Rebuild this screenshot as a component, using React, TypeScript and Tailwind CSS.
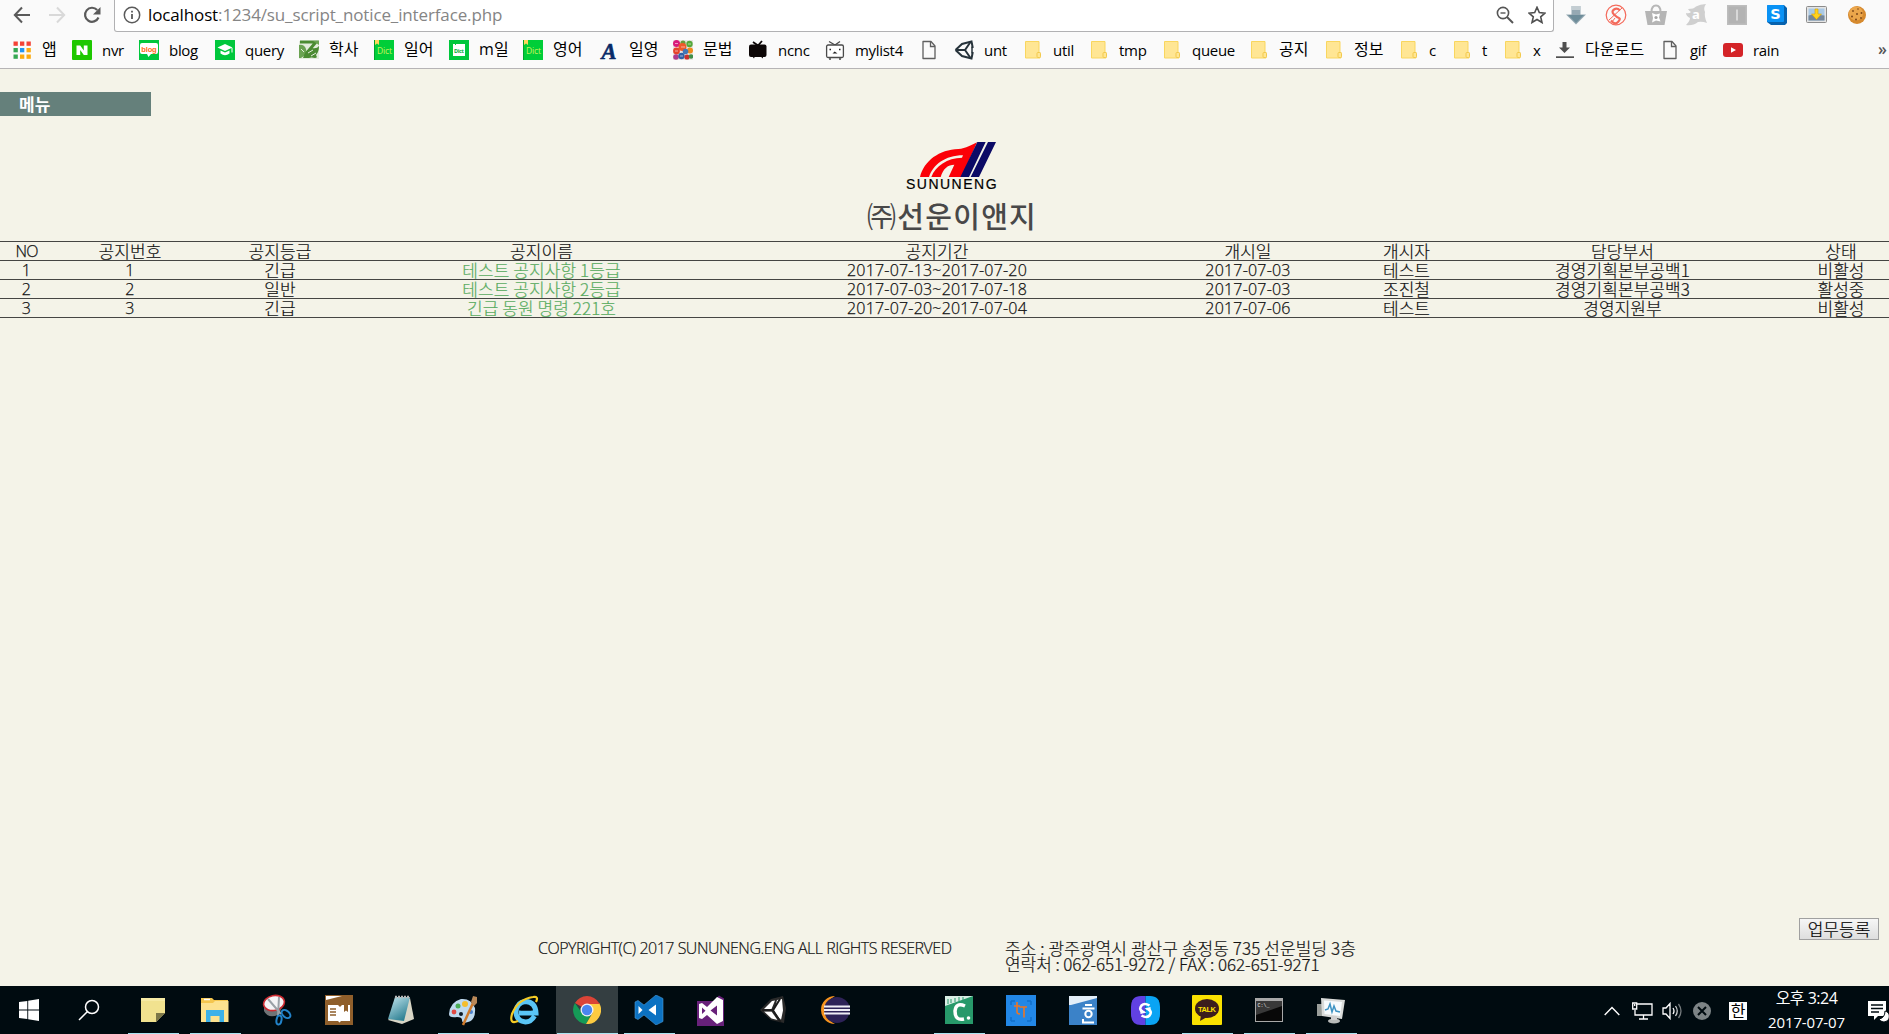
import React from "react";
import type { ReactNode } from "react";

const latin = "font-['Open_Sans','Noto_Sans_CJK_KR',sans-serif]";
const korean = "font-['Noto_Sans_CJK_KR',sans-serif]";

/* ---------- toolbar and bookmark icons ---------- */

const Folder = () => (
  <svg width="20" height="20" viewBox="0 0 20 20">
    <path d="M2.500 1.500H16v11h1v5.500H2.500z" fill="#ffe694" stroke="#f9d65f" />
    <rect x="14" y="12.500" width="3.500" height="5" rx="1" fill="#ffe694" stroke="#f2c94c" />
  </svg>
);

const Page = () => (
  <svg width="20" height="20" viewBox="0 0 20 20" fill="none" stroke="#5f5f5f" strokeWidth="1.300">
    <path d="M4 1.500h8l4 4.500v12.500H4z" strokeLinejoin="round" />
    <path d="M11.500 1.500v5H16" />
  </svg>
);

const Apps = () => {
  const colors = ["#f44336", "#f44336", "#f44336", "#34a853", "#2196f3", "#fbab10", "#34a853", "#fbab10", "#fbab10"];
  return (
    <svg width="20" height="20" viewBox="0 0 20 20">
      {colors.map((c, i) => (
        <rect key={i} x={1.5 + (i % 3) * 6.5} y={1.5 + Math.floor(i / 3) * 6.5} width="4.300" height="4.300" fill={c} />
      ))}
    </svg>
  );
};

const Naver = () => (
  <svg width="20" height="20" viewBox="0 0 20 20">
    <rect width="20" height="20" rx="1" fill="#1ec800" />
    <path d="M4.500 5.500h3.700l3.600 5v-5h3.700v9.500h-3.700l-3.600-5v5H4.500z" fill="#fff" />
  </svg>
);

const Blog = () => (
  <svg width="20" height="20" viewBox="0 0 20 20">
    <rect width="20" height="20" fill="#00c73c" />
    <path d="M3 3h14q2 0 2 2v7q0 2-2 2h-5l-2.500 3-1.500-3H3q-2 0-2-2V5q0-2 2-2z" fill="#fff" />
    <text x="2.200" y="11.500" fontSize="7.500" fontWeight="700" fill="#ff6a13" fontFamily="Liberation Sans" textLength="15.500">blog</text>
  </svg>
);

const Scholar = () => (
  <svg width="20" height="20" viewBox="0 0 20 20">
    <rect width="20" height="20" fill="#00c73c" />
    <path d="M2.500 7.500L10 4l7.500 3.500L10 11z" fill="#fff" />
    <path d="M5.500 10.500l4.500 2 4.500-2v3q-4.500 3.500-9 0z" fill="#fff" />
    <path d="M17 8v4.500" stroke="#fff" />
  </svg>
);

const School = () => (
  <svg width="20" height="20" viewBox="0 0 20 20">
    <rect y="1" width="20" height="18" fill="#e3ecdc" />
    <path d="M1 2h16L6 15" fill="none" stroke="#4b8b32" strokeWidth="3" />
    <path d="M0 5q5-1 7 4t-5 9H0z" fill="#6ba352" />
    <path d="M4 18q2-8 9-10 5 1 7-2 0 6-3 9 2 3-1 3-4-1-6 0z" fill="#4b8b32" />
    <path d="M14 1h6v4z" fill="#6ba352" />
    <path d="M9 13l5-3M12 16l5-3M2 9l3 3" stroke="#e3ecdc" />
  </svg>
);

const Dict = () => (
  <svg width="20" height="20" viewBox="0 0 20 20">
    <rect width="20" height="20" fill="#00ce38" />
    <path d="M0 0h1v20H0z" fill="#00a32c" />
    <path d="M1 0h4v5L3 3.500 1 5z" fill="#ffd65c" />
    <text x="3" y="13.500" fontSize="8.500" fill="#c8f25a" fontFamily="Open Sans" textLength="15">Dict</text>
  </svg>
);

const DictMobile = () => (
  <svg width="20" height="20" viewBox="0 0 20 20">
    <rect width="20" height="20" fill="#00c73c" />
    <path d="M4 6V4h2v1h1V4h9v12H4z" fill="#fff" />
    <text x="5" y="13" fontSize="5.500" fontWeight="700" fill="#00b035" fontFamily="Open Sans" textLength="10">Dict</text>
  </svg>
);

const LetterA = () => (
  <svg width="20" height="20" viewBox="0 0 20 20">
    <text x="2.500" y="18.500" fontSize="24" fontWeight="700" fontStyle="italic" fill="#082a68" stroke="#082a68" strokeWidth=".6" fontFamily="Liberation Serif" textLength="15" lengthAdjust="spacingAndGlyphs">A</text>
  </svg>
);

const Bubbles = () => {
  const dots: [number, number, number, string][] = [
    [3.5, 3.5, 3.5, "#d81b7a"], [10, 3, 2.6, "#6a9a3a"], [16.5, 4, 3.2, "#55a83a"], [9.5, 7, 4, "#f0582a"],
    [17, 10.5, 3, "#f08a1d"], [3.5, 11, 3.4, "#e5432a"], [12.5, 11.5, 2.8, "#4277b6"], [3, 17, 2.8, "#b03a8c"],
    [8.5, 16, 3.2, "#2f62a8"], [14, 17, 2.6, "#c8302e"], [18, 16.5, 2.3, "#3f8f48"],
  ];
  return (
    <svg width="20" height="20" viewBox="0 0 20 20">
      <rect width="20" height="20" fill="#e9e6e2" />
      {dots.map(([x, y, r, c], i) => (
        <circle key={i} cx={x} cy={y} r={r} fill={c} />
      ))}
      <path d="M2 3.500h3M8 7h4M2 11h3M7 16h3M15 4h3" stroke="#fff" strokeWidth=".8" opacity=".7" />
    </svg>
  );
};

const TvBlack = () => (
  <svg width="20" height="20" viewBox="0 0 20 20">
    <path d="M5 2l5 3.500L14 1" fill="none" stroke="#0c0606" strokeWidth="1.800" />
    <rect x="1" y="4.500" width="17.500" height="12.500" rx="2" fill="#0c0606" />
    <path d="M4 16h3l-1 2.500zM12.500 16h3l-1 2.500z" fill="#0c0606" />
  </svg>
);

const TvOutline = () => (
  <svg width="20" height="20" viewBox="0 0 20 20">
    <path d="M4 1.500l6 3.500 5-3.500" fill="none" stroke="#4a4a4a" strokeWidth="1.300" />
    <rect x="1.600" y="5" width="16.800" height="12.500" rx="1.500" fill="#fff" stroke="#4a4a4a" strokeWidth="1.300" />
    <path d="M4 19h2M14 19h2" stroke="#4a4a4a" strokeWidth="1.500" />
    <path d="M7.500 13.500l2.200-2 2.800 2z" fill="#222" />
    <path d="M4.500 9.500H6M14 9.500h1.500" stroke="#222" strokeWidth="1.500" />
  </svg>
);

/* Three-way folded cube: outer outline plus the inner spokes. */
const UnityMark = () => (
  <svg width="20" height="20" viewBox="0 0 20 20" fill="none" stroke="#27333b" strokeWidth="2">
    <path d="M1.500 10L8 4l9.500-2.500 1.300 6.500M1.500 10L8 16l9.500 2.500 1.300-6.500" />
    <path d="M2 10h9l5.500-8M11 10l5.500 8" />
    <path d="M18 6.500v7" strokeWidth="1.500" />
  </svg>
);

const Download = () => (
  <svg width="20" height="20" viewBox="0 0 20 20" fill="#4f4f4f">
    <path d="M7.500 2h4v5.500H15L9.500 13 4 7.500h3.500z" />
    <path d="M1 16.300h18V18H1z" />
  </svg>
);

const Youtube = () => (
  <svg width="20" height="20" viewBox="0 0 20 20">
    <rect y="3" width="20" height="14" rx="3" fill="#d42428" />
    <path d="M8 7.200l5 2.800-5 2.800z" fill="#fff" />
  </svg>
);

type Bookmark = { label: string; width: string; icon: ReactNode; ko?: boolean };

const bookmarks: Bookmark[] = [
  { label: "앱", width: "w-[60px]", icon: <Apps />, ko: true },
  { label: "nvr", width: "w-[67px]", icon: <Naver /> },
  { label: "blog", width: "w-[76px]", icon: <Blog /> },
  { label: "query", width: "w-[84px]", icon: <Scholar /> },
  { label: "학사", width: "w-[75px]", icon: <School />, ko: true },
  { label: "일어", width: "w-[75px]", icon: <Dict />, ko: true },
  { label: "m일", width: "w-[74px]", icon: <DictMobile />, ko: true },
  { label: "영어", width: "w-[76px]", icon: <Dict />, ko: true },
  { label: "일영", width: "w-[74px]", icon: <LetterA />, ko: true },
  { label: "문법", width: "w-[75px]", icon: <Bubbles />, ko: true },
  { label: "ncnc", width: "w-[77px]", icon: <TvBlack /> },
  { label: "mylist4", width: "w-[94px]", icon: <TvOutline /> },
  { label: "", width: "w-[35px]", icon: <Page /> },
  { label: "unt", width: "w-[69px]", icon: <UnityMark /> },
  { label: "util", width: "w-[66px]", icon: <Folder /> },
  { label: "tmp", width: "w-[73px]", icon: <Folder /> },
  { label: "queue", width: "w-[87px]", icon: <Folder /> },
  { label: "공지", width: "w-[75px]", icon: <Folder />, ko: true },
  { label: "정보", width: "w-[75px]", icon: <Folder />, ko: true },
  { label: "c", width: "w-[53px]", icon: <Folder /> },
  { label: "t", width: "w-[51px]", icon: <Folder /> },
  { label: "x", width: "w-[52px]", icon: <Folder /> },
  { label: "다운로드", width: "w-[105px]", icon: <Download />, ko: true },
  { label: "gif", width: "w-[63px]", icon: <Page /> },
  { label: "rain", width: "w-[155px]", icon: <Youtube /> },
];

const extensions: ReactNode[] = [
  <svg key="dl" width="20" height="20" viewBox="0 0 20 20">
    <path d="M5.500 1h9v8.500H20L10 19.500 0 9.500h5.500z" fill="#96a9b3" />
    <path d="M6 1h8v4H6z" fill="#c3cdd2" />
    <path d="M2 10h16l-8 8z" fill="#6e8d9a" />
  </svg>,
  <svg key="s" width="22" height="22" viewBox="0 0 22 22" fill="none" stroke="#f4695a">
    <circle cx="11" cy="11" r="9.800" strokeWidth="1.200" />
    <path d="M15 6.500q-3-3-6-1t0 5 5 3.500-1 4-7-1.500" strokeWidth="2.200" />
    <path d="M4 16L17 4M7 18l3-4" strokeWidth="1" />
  </svg>,
  <svg key="bag" width="22" height="22" viewBox="0 0 22 22">
    <path d="M6.500 8q0-6.500 4.500-6.500T15.500 8" fill="none" stroke="#b7b7b7" strokeWidth="2" />
    <path d="M0 7h22l-2.500 14h-17z" fill="#b5b5b5" />
    <path d="M7 9l4 1.500 4-1-1 4 1.500 4-4.500-1-4 2 1-4.500z" fill="#fff" />
    <circle cx="11" cy="13.500" r="1.600" fill="#a5a5a5" />
  </svg>,
  <svg key="av" width="22" height="22" viewBox="0 0 22 22">
    <path d="M3 5q6 0 8-2.500Q15 0 21 0q-3 4-1 8-1 4 2 11-5-2-9-1-5 4-12 3 4-4 4-7-4-2-4-5 3 1 5-1-2-1-3-3z" fill="#cfcfcf" />
    <text x="7" y="14.500" fontSize="13" fontWeight="700" fill="#fff" fontFamily="Open Sans">a</text>
  </svg>,
  <svg key="i" width="20" height="20" viewBox="0 0 20 20">
    <rect width="20" height="20" fill="#bdbdbd" />
    <rect x="1.500" y="1.500" width="17" height="17" fill="#b3b3b3" />
    <path d="M10 4.500v11" stroke="#e5e5e5" strokeWidth="1.500" />
  </svg>,
  <svg key="sb" width="20" height="20" viewBox="0 0 20 20">
    <path d="M1 0h16l3 3v15l-2 2H4l-4-3V1z" fill="#0662ae" />
    <rect width="17" height="17" rx="1" fill="#0a92f5" />
    <text x="3.300" y="13.500" fontSize="14.500" fontWeight="700" fill="#fff" fontFamily="DejaVu Sans">S</text>
  </svg>,
  <svg key="pic" width="21" height="18" viewBox="0 0 21 18">
    <rect x=".5" y=".5" width="20" height="16" rx="1" fill="#e4e4e4" stroke="#8c8c8c" />
    <rect x="2.500" y="2.500" width="16" height="12" fill="#a9c9e6" />
    <path d="M2.500 9.500l5-1 11 1v5h-16z" fill="#76879a" />
    <path d="M9 3h3v5h3.500l-5 5.500L5.500 8H9z" fill="#ffd21e" stroke="#d8a100" strokeWidth=".6" />
  </svg>,
  <svg key="cookie" width="20" height="20" viewBox="0 0 20 20">
    <circle cx="10" cy="10" r="9" fill="#d68a2e" />
    <circle cx="9" cy="8.500" r="7" fill="#eba64b" />
    <g fill="#7d4718">
      <circle cx="6" cy="6" r=".9" /><circle cx="11" cy="4" r=".8" /><circle cx="10" cy="9" r="1" />
      <circle cx="14.500" cy="8" r="1" /><circle cx="5" cy="11.500" r="1" /><circle cx="9" cy="14.500" r="1" /><circle cx="14" cy="13" r=".9" />
    </g>
  </svg>,
];

function BrowserChrome() {
  return (
    <header className={`shrink-0 bg-[#fafafa] text-black ${latin}`}>
      <div className="flex h-8">
        <div className="flex w-[114px] items-center pb-[3px] pl-[13px]">
          <svg width="18" height="18" viewBox="0 0 18 18" fill="none" stroke="#5a5a5a" strokeWidth="2">
            <path d="M17 9H2M9 1.500L1.800 9 9 16.500" />
          </svg>
          <svg className="ml-[17px]" width="18" height="18" viewBox="0 0 18 18" fill="none" stroke="#d9d9d9" strokeWidth="2">
            <path d="M1 9h15M9 1.500L16.200 9 9 16.500" />
          </svg>
          <svg className="ml-[17px]" width="18" height="18" viewBox="0 0 18 18">
            <path d="M15.500 11.500A7 7 0 1 1 14.200 4" fill="none" stroke="#5a5a5a" strokeWidth="2.200" />
            <path d="M17.500 1v7.500H10z" fill="#5a5a5a" />
          </svg>
        </div>
        <div className="flex w-[1440px] items-center rounded-b-[3px] border border-t-0 border-[#b1b1b3] bg-white pb-px pl-[8px]">
          <svg width="18" height="18" viewBox="0 0 18 18" fill="none" stroke="#5a5a5a">
            <circle cx="9" cy="9" r="7.700" strokeWidth="1.500" />
            <path d="M9 8v5M9 4.800v1.800" strokeWidth="1.800" />
          </svg>
          <div className="ml-[7px] text-[17px] leading-6 tracking-[-0.13px] text-[#858585]">
            <span className="text-black">localhost</span>:1234/su_script_notice_interface.php
          </div>
          <svg className="ml-auto" width="18" height="18" viewBox="0 0 18 18" fill="none" stroke="#555">
            <circle cx="7" cy="7" r="5.600" strokeWidth="1.600" />
            <path d="M11 11l6 6" strokeWidth="2" />
            <path d="M4.500 7h5" strokeWidth="1.400" />
          </svg>
          <svg className="mr-[7px] ml-[14px]" width="18" height="18" viewBox="0 0 18 18" fill="none" stroke="#505050" strokeWidth="1.600">
            <path d="M9 1.300l2.300 5.300 5.700.500-4.300 3.800 1.300 5.600L9 13.500l-5 3 1.300-5.600L1 7.100l5.700-.5z" />
          </svg>
        </div>
        <div className="flex items-center pb-[3px] pl-[2px]">
          {extensions.map((icon, i) => (
            <div key={i} className="flex w-[40.15px] justify-center">{icon}</div>
          ))}
        </div>
      </div>
      <div className="flex h-[37px] items-center border-b border-[#b6b4b6] pl-[12px]">
        {bookmarks.map((b, i) => (
          <div key={i} className={`flex shrink-0 items-center gap-[10px] whitespace-nowrap ${b.width}`}>
            {b.icon}
            <span className={b.ko ? "pb-[2px] text-[16px] leading-5 tracking-[0.15px]" : "pb-px text-[15px] leading-5 tracking-[-0.3px]"}>{b.label}</span>
          </div>
        ))}
        <span className="shrink-0 pb-[3px] text-[16px] font-semibold leading-5 text-[#555]">»</span>
      </div>
    </header>
  );
}

/* ---------- page ---------- */

const columns = [
  "w-[53px]", "w-[154px]", "w-[146px]", "w-[377px]", "w-[414px]", "w-[208px]", "w-[109px]", "w-[323px]", "w-[105px] pl-[9px]",
];
const headings = ["NO", "공지번호", "공지등급", "공지이름", "공지기간", "개시일", "개시자", "담당부서", "상태"];
const notices = [
  ["1", "1", "긴급", "테스트 공지사항 1등급", "2017-07-13~2017-07-20", "2017-07-03", "테스트", "경영기획본부공백1", "비활성"],
  ["2", "2", "일반", "테스트 공지사항 2등급", "2017-07-03~2017-07-18", "2017-07-03", "조진철", "경영기획본부공백3", "활성중"],
  ["3", "3", "긴급", "긴급 동원 명령 221호", "2017-07-20~2017-07-04", "2017-07-06", "테스트", "경영지원부", "비활성"],
];

function Cell({ text, col, link }: { text: string; col: number; link?: boolean }) {
  const isNumeric = /^\d/.test(text);
  const style = isNumeric
    ? `text-[16px] font-light tracking-[0.2px] [-webkit-text-stroke:0.25px] ${latin}`
    : text === "NO"
      ? `text-[16px] font-light tracking-[-1px] [-webkit-text-stroke:0.25px] ${latin}`
      : `text-[17px] font-light tracking-[0.08px] [-webkit-text-stroke:0.2px] ${korean}`;
  return (
    <div className={`shrink-0 text-center whitespace-nowrap leading-[18px] ${columns[col]} ${style} ${link ? "text-[#58ab5f]" : "text-[#111]"}`}>
      {text}
    </div>
  );
}

function NoticeTable() {
  return (
    <div className="border-t border-[#454543]">
      <div className="flex h-[19px] border-b border-[#454543]">
        {headings.map((h, i) => <Cell key={i} text={h} col={i} />)}
      </div>
      {notices.map((row, r) => (
        <div key={r} className="flex h-[19px] border-b border-[#454543]">
          {row.map((t, i) => <Cell key={i} text={t} col={i} link={i === 3} />)}
        </div>
      ))}
    </div>
  );
}

function CompanyLogo() {
  return (
    <div className="mt-[26px] flex h-[99px] flex-col items-center pl-[15px]">
      <svg className="ml-[12px] shrink-0" width="76" height="35" viewBox="240 36 228 105">
        <path d="M240 141C252 92 298 59 355 57C378 56 396 44 411 37L400 62 364 141H326L343 104C324 104 310 115 302 141H274C286 108 322 84 366 83L369 76C315 76 279 105 267 141Z" fill="#fb0007" />
        <path d="M412 36H437L387 141H361ZM444 36H468L417 141H392Z" fill="#0b0a66" />
      </svg>
      <div className="mt-px text-[14px] leading-[13px] tracking-[1.5px] text-black [-webkit-text-stroke:0.2px_#000] font-['Liberation_Sans',sans-serif]">SUNUNENG</div>
      <div className={`mt-[7px] text-[29px] leading-[34px] tracking-[1.3px] text-[#484848] ${korean}`}>
        <span className="font-normal">㈜</span><span className="font-medium">선운이앤지</span>
      </div>
    </div>
  );
}

/* ---------- taskbar ---------- */

const taskIcons: { icon: ReactNode; active?: boolean; bar?: string }[] = [
  {
    bar: "w-[51px]",
    icon: (
      <svg width="24" height="24" viewBox="0 0 24 24">
        <path d="M0 0h24v15l-9 9H0z" fill="#f1e28f" /><path d="M15 15h9l-9 9z" fill="#7c7748" /><path d="M0 0h24v3H0z" fill="#f6eaa4" />
      </svg>
    ),
  },
  {
    bar: "w-[51px]",
    icon: (
      <svg width="28" height="26" viewBox="0 0 28 26">
        <path d="M0 1h11l2 2h14v22H0z" fill="#f5c64e" /><path d="M0 6h12l2-2h13.500v21H0z" fill="#fde28f" />
        <path d="M5 13h18v12h-4.500v-6h-9v6H5z" fill="#3db1e8" /><path d="M3 2.500h6" stroke="#fff" strokeWidth="1.500" />
      </svg>
    ),
  },
  {
    icon: (
      <svg width="30" height="32" viewBox="0 0 30 32">
        <path d="M2 11v6q4 8 14 4l5-9z" fill="#6f7376" />
        <ellipse cx="12" cy="9" rx="10.500" ry="7.500" fill="#f4f4f6" stroke="#cc2b32" strokeWidth="1.600" transform="rotate(-12 12 9)" />
        <path d="M6 5l13 15M17 3l-1 19" stroke="#9aa1a7" strokeWidth="2" />
        <g fill="none" stroke="#2283ca" strokeWidth="2"><ellipse cx="24" cy="20" rx="5" ry="3.200" transform="rotate(40 24 20)" /><ellipse cx="17" cy="26" rx="2.500" ry="4.500" transform="rotate(10 17 26)" /></g>
      </svg>
    ),
  },
  {
    icon: (
      <svg width="28" height="30" viewBox="0 0 28 30">
        <path d="M0 0h28v30H0z" fill="#8f5f2b" /><path d="M1 5V1h16z" fill="#fff" />
        <path d="M3 10h10l2 2 2-2h2v7l2-1.500 2 1.500v-7h2v16h-9l-1.500 1.500L13 26H3z" fill="#fff" />
        <path d="M5 14h6M5 17h6M5 20h6" stroke="#8f5f2b" strokeWidth="1.300" />
      </svg>
    ),
  },
  {
    icon: (
      <svg width="28" height="30" viewBox="0 0 28 30">
        <defs><linearGradient id="np" x1="0" y1="0" x2="0.600" y2="1"><stop offset="0" stopColor="#c5e8f0" /><stop offset="1" stopColor="#2c7f92" /></linearGradient></defs>
        <path d="M23 3l4 21-12 5-14-4z" fill="#d8d6c6" /><path d="M8 2h15l-6 24-16-2z" fill="url(#np)" />
        <path d="M8 2h15" stroke="#b7b7b7" strokeWidth="2.500" strokeDasharray="2 1" />
      </svg>
    ),
  },
  {
    bar: "w-[51px]",
    icon: (
      <svg width="30" height="31" viewBox="0 0 30 31">
        <path d="M1 19Q2 7 13 4q10-1 14 9 1 12-7 14-6 2-6-2 0-3-5-3-8 1-8-3z" fill="#bed9ee" />
        <circle cx="13" cy="19" r="2" fill="#0b1a26" /><circle cx="6" cy="17" r="2.400" fill="#e34b43" /><circle cx="10" cy="11" r="2.500" fill="#49ac55" /><circle cx="17" cy="9" r="3" fill="#f4bd2d" /><circle cx="23" cy="17" r="2" fill="#4d83cf" />
        <path d="M15 30L25 8" stroke="#cf7a2b" strokeWidth="2.500" /><path d="M23 7l2-6 4 1v6l-3 3z" fill="#b98858" />
      </svg>
    ),
  },
  {
    icon: (
      <svg width="30" height="30" viewBox="0 0 30 30">
        <path d="M24.500 21Q21 27 15.500 27 6 26 6 16.500 7 7 15.500 6.500q10 .5 10.500 11.500H9" fill="none" stroke="#5ac5f5" strokeWidth="5" />
        <path d="M10.500 14.500h11" stroke="#000b0f" strokeWidth="2" />
        <path d="M26 7q3-6-3-5Q8 4 2 19q-3 11 6 7" fill="none" stroke="#f5cb25" strokeWidth="2.200" />
      </svg>
    ),
  },
  {
    active: true,
    bar: "w-[61px]",
    icon: (
      <svg width="28" height="28" viewBox="0 0 28 28">
        <path d="M14 14L1.900 7A14 14 0 0 1 26.100 7z" fill="#db4437" />
        <path d="M1.900 7A14 14 0 0 0 13 28l6-11H9z" fill="#159b57" /><path d="M26.100 7A14 14 0 0 1 13 28l6.500-11L16 7z" fill="#fdcb41" />
        <path d="M12 7h14.100l.5 1H14z" fill="#db4437" /><circle cx="14" cy="14" r="6.500" fill="#f3f3f3" /><circle cx="14" cy="14" r="5.200" fill="#4a86f0" />
      </svg>
    ),
  },
  {
    bar: "w-[51px]",
    icon: (
      <svg width="30" height="30" viewBox="0 0 30 30">
        <path d="M1 7l3-1.500L10 10 22 0l7 3.500v23L22 30 10 20l-6 4.500L1 23z" fill="#0c72c2" stroke="#4e9bd3" strokeWidth=".6" />
        <path d="M4.500 11v8l4-4zM22 9.500v11L14.500 15z" fill="#fff" />
      </svg>
    ),
  },
  {
    icon: (
      <svg width="28" height="31" viewBox="0 0 28 31">
        <path d="M0 6h17l5-5.500 5 3V31H0z" fill="#68217a" />
        <path d="M2 9l3-1 5 4L20 2l6 3v21l-6 3-10-9-5 4-3-1z" fill="#fff" /><path d="M5 12.500v6.500l3.500-3.300zM20 10.500v10L13.500 15.500z" fill="#68217a" />
      </svg>
    ),
  },
  {
    icon: (
      <svg width="26" height="28" viewBox="0 0 26 28">
        <path d="M0 14L11 3l12-3 3 12-2 15-13-3z" fill="#2a2a2a" />
        <path d="M4 13l8-8 3-.5L11.500 13zM17 4l5-1 1 11.500-2 9.500-6.500-10z" fill="#fff" /><path d="M4 15.500h7.500l6 8.500-6-1.500z" fill="#fff" />
        <path d="M13.500 14.500L20 4v19z" fill="#fff" /><path d="M2 14.300h11L20 3M13 14.300L20.500 26" fill="none" stroke="#1c1c1c" strokeWidth="2" />
      </svg>
    ),
  },
  {
    icon: (
      <svg width="30" height="28" viewBox="0 0 30 28">
        <path d="M15 0A14 14 0 0 0 15 28 16 16 0 0 1 15 0" fill="#f7941e" /><circle cx="17" cy="14" r="13" fill="#2d2257" />
        <path d="M4 10.500h26M4 14h26M4 17.500h26" stroke="#efedf5" strokeWidth="2" />
      </svg>
    ),
  },
  { icon: null },
  {
    bar: "w-[51px]",
    icon: (
      <svg width="28" height="28" viewBox="0 0 28 28">
        <path d="M0 0h28v28H0z" fill="#27996a" /><path d="M0 0h28L0 10z" fill="#d9eee5" />
        <path d="M3 3v5M6 3v4M10 2v4M14 1v4M18 1v3" stroke="#27996a" />
        <path d="M20 10q-9-4-10 5 0 10 9 8" fill="none" stroke="#fff" strokeWidth="3.500" /><circle cx="23.500" cy="22" r="1.800" fill="#fff" />
      </svg>
    ),
  },
  {
    icon: (
      <svg width="30" height="31" viewBox="0 0 30 31">
        <path d="M0 0h30v31H0z" fill="#2287e6" />
        <path d="M5 6h4M5 6v4M25 6h-4M25 6v4M5 26h4M5 26v-4M25 26h-4M25 26v-4" stroke="#1270ca" strokeWidth="1.500" />
        <path d="M11 7v10q0 2 3 2M8 11h6M13.500 12H21M18 12v10.500" fill="none" stroke="#ee7623" strokeWidth="1.600" />
      </svg>
    ),
  },
  {
    icon: (
      <svg width="28" height="29" viewBox="0 0 28 29">
        <path d="M0 0h28v29H0z" fill="#3b82c8" /><path d="M0 0h28v2L2 9H0z" fill="#e3eef8" />
        <path d="M16 9h7M13.500 12.500h12M14 23v3.500h11" fill="none" stroke="#fff" strokeWidth="2" /><circle cx="19.500" cy="18" r="3.200" fill="none" stroke="#fff" strokeWidth="2" />
      </svg>
    ),
  },
  {
    icon: (
      <svg width="29" height="29" viewBox="0 0 29 29">
        <path d="M14.500 0H10Q0 0 0 11v7q0 11 10 11h4.500z" fill="#6141e2" /><path d="M14.500 0H19q10 0 10 11v7q0 11-10 11h-4.500z" fill="#0aa4f4" />
        <path d="M18.500 9.500q-5-3-8 0-3 4 1 6M10.500 19.500q5 3 8 0 3-4-1-6" fill="none" stroke="#fff" strokeWidth="2.600" /><path d="M9 12.500l6.500 4-6 1.500zM20 16.500l-6.500-4 6-1.500z" fill="#fff" />
      </svg>
    ),
  },
  {
    bar: "w-[51px]",
    icon: (
      <svg width="30" height="30" viewBox="0 0 30 30">
        <rect width="30" height="30" rx="1" fill="#fae100" /><ellipse cx="15" cy="13.500" rx="12" ry="9.500" fill="#3b1d1d" /><path d="M9 20l-1 6 7-4z" fill="#3b1d1d" />
        <text x="6" y="16.500" fontSize="7.500" fontWeight="700" fill="#fae100" fontFamily="Liberation Sans" textLength="18">TALK</text>
      </svg>
    ),
  },
  {
    bar: "w-[51px]",
    icon: (
      <svg width="28" height="24" viewBox="0 0 28 24">
        <path d="M0 0h28v24H0z" fill="#a8a8a8" /><path d="M1 3h26v20H1z" fill="#080808" /><path d="M1 3h26v5L1 17z" fill="#393939" />
        <text x="2.500" y="9" fontSize="5" fill="#eee" fontFamily="Liberation Mono">C:\_</text>
      </svg>
    ),
  },
  {
    bar: "w-[51px]",
    icon: (
      <svg width="28" height="28" viewBox="0 0 28 28">
        <path d="M0 8h6v12H0z" fill="#9a9e9a" /><path d="M4 2l24 2-3 19-20-3z" fill="#d9dbd9" /><path d="M7 4.500l18 1.500-2 14-15.500-2z" fill="#f7fbfd" />
        <path d="M8 14l3-1 2-5 2 8 2-6 2 5 4 1" fill="none" stroke="#3e93c3" strokeWidth="1.500" /><ellipse cx="17" cy="25" rx="6" ry="2.600" fill="#b9bbb9" /><path d="M14 20h6v4h-6z" fill="#cfcfcf" />
      </svg>
    ),
  },
];

function Taskbar() {
  return (
    <footer className="flex h-12 shrink-0 bg-[#000b10] text-white">
      <div className="flex w-[58px] items-center justify-center">
        <svg width="20" height="22" viewBox="0 0 20 22" fill="#fff">
          <path d="M0 3l8.300-1.100v8.600H0zM9.200 1.700L20 0v10.500H9.200zM0 11.400h8.300V20L0 18.900zM9.200 11.400H20V22L9.200 20.200z" />
        </svg>
      </div>
      <div className="flex w-[64px] items-center justify-center pr-[2px]">
        <svg width="22" height="22" viewBox="0 0 22 22" fill="none" stroke="#fff" strokeWidth="1.500">
          <circle cx="14" cy="8" r="6.500" /><path d="M9.500 12.500L1 21" />
        </svg>
      </div>
      {taskIcons.map((t, i) => (
        <div key={i} className={`relative flex w-[62px] items-center justify-center ${t.active ? "bg-[#343e41]" : ""}`}>
          {t.icon}
          {t.bar && (
            <div className="absolute inset-x-0 bottom-0 flex justify-center">
              <div className={`h-px bg-[#a9e4f2] ${t.bar}`} />
            </div>
          )}
        </div>
      ))}
      <div className="ml-auto flex items-center">
        <svg className="mt-[2px]" width="16" height="10" viewBox="0 0 16 10" fill="none" stroke="#fff" strokeWidth="1.400"><path d="M.7 9L8 1.500 15.300 9" /></svg>
        <svg className="mt-px ml-[12px]" width="21" height="18" viewBox="0 0 21 18" fill="none" stroke="#fff" strokeWidth="1.300">
          <path d="M5 2h15v11H3V8M11.500 13v4M7 17h9" /><path d="M.7 1h4v6h-4z" fill="#000b10" /><path d="M2.700 2v2" />
        </svg>
        <svg className="mt-px ml-[9px]" width="21" height="18" viewBox="0 0 21 18" fill="none" stroke="#fff" strokeWidth="1.300">
          <path d="M1 6h3l4-4.500v15L4 12H1zM11 6q2 3 0 6" /><path d="M13.500 4q3.500 5 0 10" opacity=".8" /><path d="M16.500 2q5 7 0 14" opacity=".45" />
        </svg>
        <svg className="mt-px ml-[10px]" width="18" height="18" viewBox="0 0 18 18">
          <circle cx="9" cy="9" r="9" fill="#7d8486" /><path d="M5 5l8 8M13 5l-8 8" stroke="#000b10" strokeWidth="2" />
        </svg>
        <div className={`mt-px ml-[18px] flex size-[18px] items-center justify-center bg-white pb-px text-[16px] leading-[18px] text-black ${korean}`}>한</div>
        <div className="ml-[14px] flex w-[91px] flex-col items-center whitespace-nowrap">
          <span className={`text-[16px] leading-6 tracking-[-0.5px] ${latin}`}>오후 3:24</span>
          <span className={`text-[15px] leading-6 tracking-[-0.15px] ${latin}`}>2017-07-07</span>
        </div>
        <svg className="mt-px ml-[16px]" width="21" height="22" viewBox="0 0 21 22">
          <path d="M0 1h18v15H10l-4 4v-4H0z" fill="#fff" /><path d="M3 5h12M3 8.500h12M3 12h8" stroke="#000b10" strokeWidth="1.400" />
          <path d="M17 11a5.500 5.500 0 1 1-6 8q6-1 6-8z" fill="#fff" stroke="#000b10" />
        </svg>
      </div>
    </footer>
  );
}

export default function App() {
  return (
    <div className="flex h-[1034px] w-[1889px] flex-col overflow-hidden bg-[#f4f3e8]">
      <BrowserChrome />
      <main className="flex min-h-0 flex-1 flex-col">
        <nav className={`mt-[23px] h-6 w-[151px] bg-[#65807b] pl-[19px] text-[17px] font-bold leading-[23px] text-white ${korean}`}>메뉴</nav>
        <CompanyLogo />
        <NoticeTable />
        <button className={`mt-auto mr-[10px] flex h-[22px] w-[80px] items-center justify-center self-end border border-[#a0a0a0] bg-gradient-to-b from-[#f6f6f6] to-[#dedede] pb-px text-[17px] font-light leading-5 text-black [-webkit-text-stroke:0.2px] ${korean}`}>
          업무등록
        </button>
        <div className={`flex h-[46px] pl-[538px] text-[#111] [-webkit-text-stroke:0.2px] ${korean}`}>
          <div className="w-[467px] whitespace-nowrap text-[16px] font-light leading-[17px] tracking-[-0.49px] font-['Open_Sans',sans-serif]">COPYRIGHT(C) 2017 SUNUNENG.ENG ALL RIGHTS RESERVED</div>
          <address className="text-[17px] font-light not-italic leading-4">
            <p className="tracking-[0.08px]">주소 : 광주광역시 광산구 송정동 735 선운빌딩 3층</p>
            <p className="tracking-[-0.06px]">연락처 : 062-651-9272 / FAX : 062-651-9271</p>
          </address>
        </div>
      </main>
      <Taskbar />
    </div>
  );
}
